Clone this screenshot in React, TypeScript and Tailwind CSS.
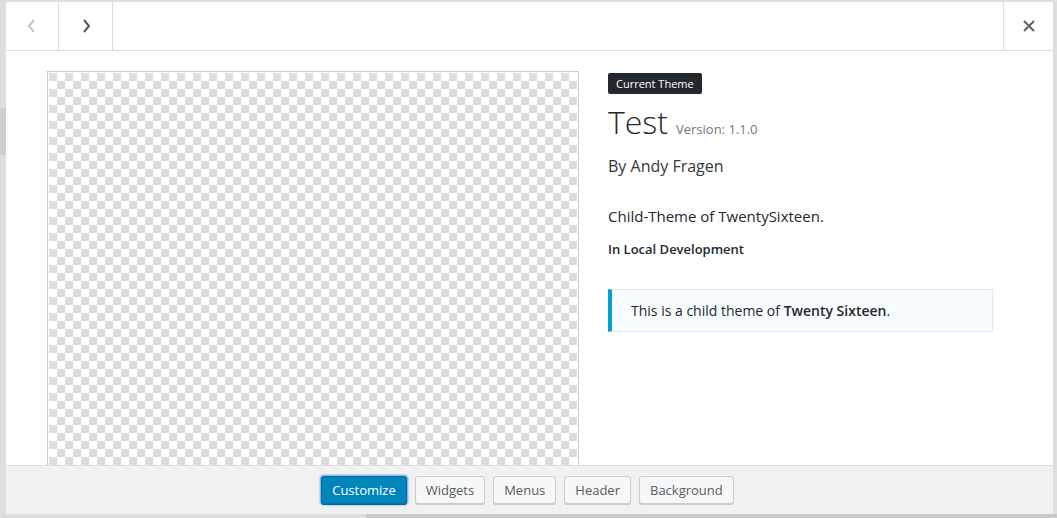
import React from "react";

const font = { fontFamily: '"Open Sans", "Noto Sans", sans-serif' };

function Btn({ children, primary }: { children: React.ReactNode; primary?: boolean }) {
  if (primary) {
    return (
      <button className="h-[28px] px-[10px] rounded-[3px] border border-[#0073aa] bg-[#0085ba] text-white text-[13px] leading-[26px] shadow-[0_1px_0_#006799,0_0_2px_1px_#5b9dd9]">
        {children}
      </button>
    );
  }
  return (
    <button className="h-[28px] px-[10px] rounded-[3px] border border-[#cccccc] bg-[#f7f7f7] text-[#555d66] text-[13px] leading-[26px] shadow-[0_1px_0_#cccccc]">
      {children}
    </button>
  );
}

export default function App() {
  return (
    <div className="relative w-[1057px] h-[518px] bg-[#dedede] overflow-hidden" style={font}>
      <div className="absolute left-0 top-[108px] w-[6px] h-[47px] bg-[#cfcfcf]" />
      <div className="absolute left-[366px] top-[514px] w-[700px] h-[4px] bg-[#c8c8c8]" />
      <div className="relative ml-[6px] mt-[2px] w-[1047px] h-[512px] bg-white flex flex-col text-[#23282d]">
        {/* header */}
        <div className="h-[49px] flex border-b border-[#dddddd] shrink-0">
          <div className="w-[53px] border-r border-[#dddddd] flex items-center justify-center">
            <svg width="10" height="16" viewBox="0 0 10 16">
              <path d="M7 2 L2 8 L7 14" fill="none" stroke="#c5c5c5" strokeWidth="2" />
            </svg>
          </div>
          <div className="w-[54px] border-r border-[#dddddd] flex items-center justify-center">
            <svg width="10" height="16" viewBox="0 0 10 16">
              <path d="M3 2 L8 8 L3 14" fill="none" stroke="#555555" strokeWidth="2" />
            </svg>
          </div>
          <div className="flex-1" />
          <div className="w-[50px] border-l border-[#dddddd] flex items-center justify-center">
            <svg width="14" height="14" viewBox="0 0 14 14">
              <path d="M2 2 L12 12 M12 2 L2 12" fill="none" stroke="#666666" strokeWidth="2.2" />
            </svg>
          </div>
        </div>
        {/* body */}
        <div className="flex-1 overflow-hidden flex pl-[41px] pt-[20px]">
          <div className="w-[532px] h-[420px] shrink-0 border border-[#cccccc] p-[1px] bg-white">
            <div className="w-full h-full [background-image:conic-gradient(#ffffff_25%,#dddddd_0_50%,#ffffff_0_75%,#dddddd_0)] [background-size:16px_16px]" />
          </div>
          <div className="ml-[29px] w-[385px] flex flex-col">
            <div className="mt-[2px] self-start h-[21px] px-[8px] rounded-[2px] bg-[#23282d] text-white text-[11px] leading-[21px]">
              Current Theme
            </div>
            <div className="mt-[8px] flex items-baseline">
              <span className="text-[32px] leading-[40px] font-light text-[#23282d]">Test</span>
              <span className="ml-[8px] text-[13px] text-[#72777c]">Version: 1.1.0</span>
            </div>
            <div className="mt-[13px] text-[16px] leading-[22px] text-[#32373c]">By Andy Fragen</div>
            <div className="mt-[28px] text-[15px] leading-[22px] text-[#23282d]">Child-Theme of TwentySixteen.</div>
            <div className="mt-[13px] text-[13px] leading-[18px] font-semibold text-[#23282d]">In Local Development</div>
            <div className="mt-[31px] h-[43px] border border-[#e5e5e5] border-l-[4px] border-l-[#00a0d2] bg-[#f7fcfe] pl-[19px] flex items-center text-[14px] text-[#23282d]">
              <span>
                This is a child theme of <strong className="font-semibold">Twenty Sixteen</strong>.
              </span>
            </div>
          </div>
        </div>
        {/* footer */}
        <div className="h-[49px] shrink-0 border-t border-[#dddddd] bg-[#f1f1f1] flex items-center justify-center gap-[8px] pr-[4px]">
          <Btn primary>Customize</Btn>
          <Btn>Widgets</Btn>
          <Btn>Menus</Btn>
          <Btn>Header</Btn>
          <Btn>Background</Btn>
        </div>
      </div>
    </div>
  );
}
